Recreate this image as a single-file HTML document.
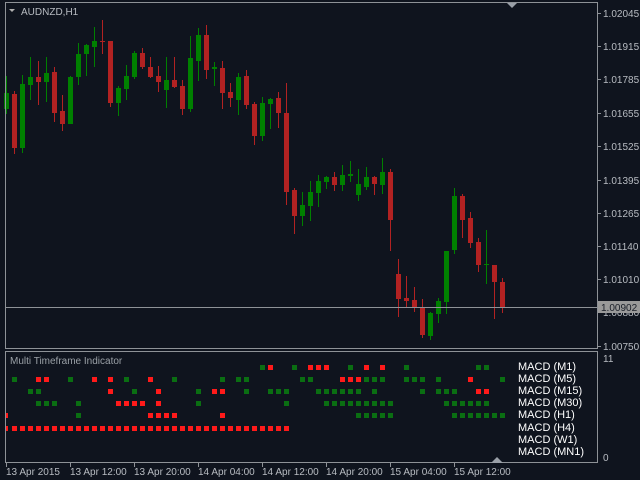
<!DOCTYPE html>
<html><head><meta charset="utf-8"><style>
html,body{margin:0;padding:0;background:#0f141e;}
svg{display:block;}
text{font-family:"Liberation Sans",sans-serif;}
</style></head><body>
<svg id="s" width="640" height="480" viewBox="0 0 640 480" xmlns="http://www.w3.org/2000/svg">
<rect width="640" height="480" fill="#0f141e"/>
<g id="c"></g>
<!-- borders -->
<g stroke="#8e9297" fill="none" stroke-width="1">
<rect x="5.5" y="2.5" width="592" height="346"/>
<rect x="5.5" y="351.5" width="592" height="111"/>
<line x1="5" y1="307.5" x2="598" y2="307.5"/>
</g>
<g stroke="#8e9297" stroke-width="1" id="ticks"></g>
<polygon points="507,3 517,3 512,8" fill="#9aa0a8"/>
<polygon points="491,463 503,463 497,457" fill="#9aa0a8"/>
<polygon points="9,9 15,9 12,12" fill="#b0b0b0"/>
<text x="21" y="15" font-size="10" fill="#b8bcc2">AUDNZD,H1</text>
<text x="10" y="364" font-size="10" fill="#9aa0a6">Multi Timeframe Indicator</text>
<g font-size="10" fill="#b8bcc2">
<text x="603" y="17">1.02045</text>
<text x="603" y="50">1.01915</text>
<text x="603" y="83">1.01785</text>
<text x="603" y="117">1.01655</text>
<text x="603" y="150">1.01525</text>
<text x="603" y="184">1.01395</text>
<text x="603" y="217">1.01265</text>
<text x="603" y="250">1.01140</text>
<text x="603" y="283">1.01010</text>
<text x="603" y="316">1.00880</text>
<text x="603" y="350">1.00750</text>
<text x="603" y="362">11</text>
<text x="603" y="461">0</text>
</g>
<rect x="598" y="301" width="42" height="12" fill="#9a9a9a"/>
<text x="601" y="311" font-size="10" fill="#1a1f28">1.00902</text>
<g font-size="10" fill="#b8bcc2">
<text x="6" y="475">13 Apr 2015</text>
<text x="70" y="475">13 Apr 12:00</text>
<text x="134" y="475">13 Apr 20:00</text>
<text x="198" y="475">14 Apr 04:00</text>
<text x="262" y="475">14 Apr 12:00</text>
<text x="326" y="475">14 Apr 20:00</text>
<text x="390" y="475">15 Apr 04:00</text>
<text x="454" y="475">15 Apr 12:00</text>
</g>
<g font-size="11" fill="#ffffff">
<text x="518" y="370">MACD (M1)</text>
<text x="518" y="382">MACD (M5)</text>
<text x="518" y="394">MACD (M15)</text>
<text x="518" y="406">MACD (M30)</text>
<text x="518" y="418">MACD (H1)</text>
<text x="518" y="431">MACD (H4)</text>
<text x="518" y="443">MACD (W1)</text>
<text x="518" y="455">MACD (MN1)</text>
</g>
</svg>
<script>
var R="#b22222",G="#008000";
// [color, bodyTop, bodyBot, wickTop, wickBot]
var C=[
[G,93,109,76,114],[R,94,148,91,154],[G,84,148,75,153],[G,77,85,57,100],[R,77,82,61,105],
[G,73,82,57,102],[R,72,113,67,122],[R,111,124,95,131],[G,77,124,76,124],[G,54,77,43,85],
[G,45,54,44,76],[G,41,47,27,67],[R,41,42,20,54],[R,41,103,41,107],[G,88,103,86,116],
[G,76,89,65,100],[G,53,77,51,79],[R,53,67,48,69],[R,67,77,57,78],[R,76,82,66,92],
[G,80,90,57,108],[R,80,87,57,88],[R,86,109,80,115],[G,58,109,36,112],[G,35,61,28,81],
[R,35,70,25,79],[G,67,69,62,86],[R,68,93,61,109],[R,92,98,83,107],[G,77,100,73,115],
[R,76,105,70,109],[R,104,136,102,145],[G,103,136,97,141],[G,99,104,98,129],[R,98,113,92,128],
[R,113,192,83,205],[R,190,216,188,234],[G,205,216,192,226],[G,192,206,181,221],[G,181,193,175,207],
[G,177,182,176,189],[R,177,185,172,191],[G,175,185,165,191],[G,174,176,161,182],[G,184,195,169,201],
[G,177,187,167,190],[R,177,184,176,195],[G,172,185,158,194],[R,172,220,169,251],[R,274,299,259,317],
[R,298,301,276,307],[R,300,308,287,312],[R,307,335,299,338],[G,313,336,312,340],[G,301,314,298,323],
[G,251,302,251,314],[G,196,250,188,254],[R,196,220,194,238],[R,218,243,212,248],[R,242,265,238,272],
[G,264,265,230,284],[R,265,282,265,319],[R,282,308,278,313]];
var s="";
C.forEach(function(c,k){var x=6+8*k;
 s+='<rect x="'+x+'" y="'+c[3]+'" width="1" height="'+(c[4]-c[3])+'" fill="'+c[0]+'"/>';
 var h=Math.max(1,c[2]-c[1]);
 s+='<rect x="'+(x-2)+'" y="'+c[1]+'" width="5" height="'+h+'" fill="'+c[0]+'"/>';});
var DR="#ff1a1a",DG="#0a6e12";
var rows=[
[365,{g:[32,36,43,50,59,60],r:[33,38,39,40,45,47]}],
[377,{g:[1,8,15,21,27,29,30,37,38,45,46,47,50,51,52,54,62],r:[4,5,11,13,18,42,43,44,58]}],
[389,{g:[3,4,16,24,30,33,34,35,39,40,41,42,43,44,46,52,54,55,56],r:[13,19,26,27,59,60]}],
[401,{g:[4,5,6,9,24,35,40,41,42,43,44,45,46,47,48,55,56,57,58,59,60],r:[14,15,16,17,19]}],
[413,{g:[9,44,45,46,47,48,56,57,58,59,60,61,62],r:[0,18,19,20,21,27]}],
[426,{g:[],r:[]}]];
for(var i=0;i<36;i++)rows[5][1].r.push(i);
rows.forEach(function(r){var y=r[0];
 r[1].g.forEach(function(k){s+='<rect x="'+(4+8*k)+'" y="'+y+'" width="5" height="5" fill="'+DG+'"/>';});
 r[1].r.forEach(function(k){var x=4+8*k;if(x<6){s+='<rect x="5" y="'+y+'" width="3" height="5" fill="'+DR+'"/>';}else s+='<rect x="'+x+'" y="'+y+'" width="5" height="5" fill="'+DR+'"/>';});});
document.getElementById("c").innerHTML=s;
var t="";
[13,46,79,113,146,180,213,246,279,312,346].forEach(function(y){t+='<line x1="597" y1="'+(y+0.5)+'" x2="601" y2="'+(y+0.5)+'"/>';});
[6,70,134,198,262,326,390,454].forEach(function(x){t+='<line x1="'+(x+0.5)+'" y1="463" x2="'+(x+0.5)+'" y2="467"/>';});
document.getElementById("ticks").innerHTML=t;
</script>
</body></html>
